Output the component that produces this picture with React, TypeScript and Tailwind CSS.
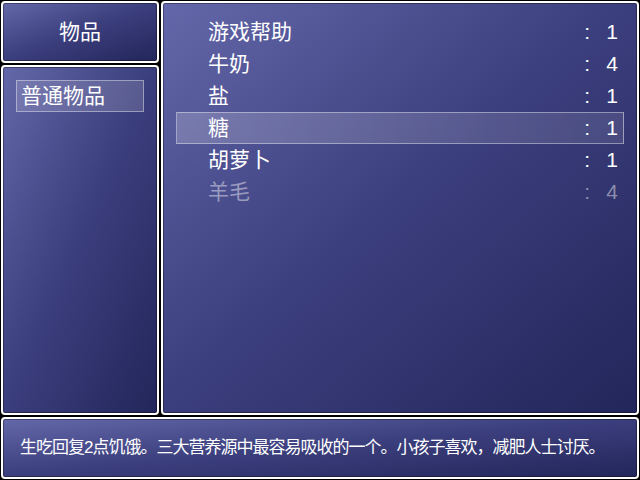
import React from "react";

type Item = { name: string; count: number; disabled?: boolean };

const items: Item[] = [
  { name: "游戏帮助", count: 1 },
  { name: "牛奶", count: 4 },
  { name: "盐", count: 1 },
  { name: "糖", count: 1 },
  { name: "胡萝卜", count: 1 },
  { name: "羊毛", count: 4, disabled: true },
];

const selected = 3;

function Panel({ className, children }: { className?: string; children?: React.ReactNode }) {
  return (
    <div className={`p-px ${className ?? ""}`}>
      <div className="h-full rounded-[4px] border-2 border-white bg-linear-to-br from-[#6467a9] via-[#3b3e7c] to-[#23265a] shadow-[inset_0_0_0_1px_rgba(0,0,0,0.35)]">
        {children}
      </div>
    </div>
  );
}

export default function App() {
  return (
    <div className="w-[640px] h-[480px] bg-black flex flex-col text-white font-['Liberation_Sans','Noto_Sans_CJK_SC',sans-serif] select-none">
      <div className="flex h-[416px]">
        <div className="w-[160px] flex flex-col">
          <Panel className="h-[64px]">
            <div className="h-full flex items-center justify-center text-[21px] pb-px">物品</div>
          </Panel>
          <Panel className="flex-1">
            <div className="px-[13px] pt-[13px]">
              <div className="h-8 flex items-center px-[4px] text-[21px] border border-white/40 bg-white/15">
                普通物品
              </div>
            </div>
          </Panel>
        </div>

        <Panel className="flex-1">
          <div className="px-[13px] pt-[13px] flex flex-col">
            {items.map((it, i) => (
              <div
                key={it.name}
                className={`h-8 flex items-center text-[21px] pl-[31px] pr-[5px] border ${
                  i === selected
                    ? "border-white/40 bg-linear-to-r from-white/20 to-white/10"
                    : "border-transparent"
                } ${it.disabled ? "text-white/45" : "text-white"}`}
              >
                <span className="flex-1">{it.name}</span>
                <span>:</span>
                <span className="w-[28px] text-right">{it.count}</span>
              </div>
            ))}
          </div>
        </Panel>
      </div>

      <Panel className="h-[64px]">
        <div className="h-full flex items-center pl-[17px] text-[17px] tracking-[-1px]">
          生吃回复2点饥饿。三大营养源中最容易吸收的一个。小孩子喜欢，减肥人士讨厌。
        </div>
      </Panel>
    </div>
  );
}
